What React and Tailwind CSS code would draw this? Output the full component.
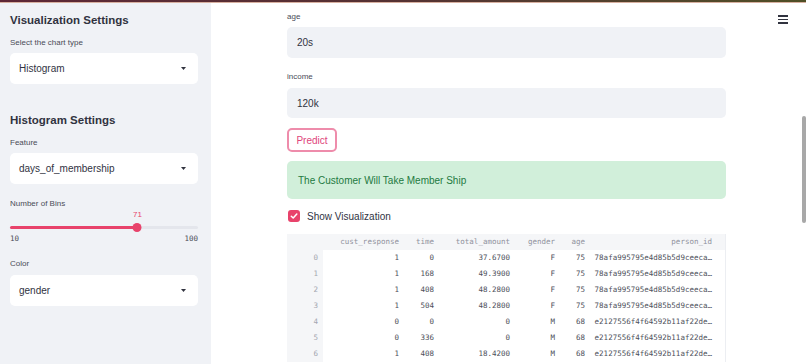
import React from 'react';

const rows = [
  ['0', '1', '0', '37.6700', 'F', '75', '78afa995795e4d85b5d9ceeca…'],
  ['1', '1', '168', '49.3900', 'F', '75', '78afa995795e4d85b5d9ceeca…'],
  ['2', '1', '408', '48.2800', 'F', '75', '78afa995795e4d85b5d9ceeca…'],
  ['3', '1', '504', '48.2800', 'F', '75', '78afa995795e4d85b5d9ceeca…'],
  ['4', '0', '0', '0', 'M', '68', 'e2127556f4f64592b11af22de…'],
  ['5', '0', '336', '0', 'M', '68', 'e2127556f4f64592b11af22de…'],
  ['6', '1', '408', '18.4200', 'M', '68', 'e2127556f4f64592b11af22de…'],
];

const headers = ['', 'cust_response', 'time', 'total_amount', 'gender', 'age', 'person_id'];

const SelectBox = ({ value }) => (
  <div className="h-[31px] bg-white rounded-[5px] flex items-center justify-between pl-[9px] pr-[12px]">
    <span className="text-[10px] text-[#31333f]">{value}</span>
    <svg width="5" height="3" viewBox="0 0 5 3">
      <path d="M0 0 L5 0 L2.5 3 Z" fill="#31333f" />
    </svg>
  </div>
);

const Label = ({ children, className = '' }) => (
  <div className={`text-[8px] leading-[10px] text-[#4a4c57] ${className}`}>{children}</div>
);

const App = () => {
  return (
    <div className="w-[806px] h-[364px] overflow-hidden flex flex-col bg-white" style={{ fontFamily: '"Liberation Sans", Arial, sans-serif' }}>
      <div className="h-[3px] bg-gradient-to-r from-[#5e2736] via-[#553233] to-[#4f4f26] border-b border-b-[#d8b0a0]" />
      <div className="flex flex-1 relative">
        {/* sidebar */}
        <div className="w-[211px] bg-[#f0f2f6] px-[10px] pr-[13px] pt-[10px]">
          <div className="text-[11.5px] leading-[14px] font-bold text-[#31333f]">Visualization Settings</div>
          <Label className="mt-[11px]">Select the chart type</Label>
          <div className="mt-[5px]"><SelectBox value="Histogram" /></div>

          <div className="mt-[29px] text-[11.5px] leading-[14px] font-bold text-[#31333f]">Histogram Settings</div>
          <Label className="mt-[11px]">Feature</Label>
          <div className="mt-[5px]"><SelectBox value="days_of_membership" /></div>

          <Label className="mt-[15px]">Number of Bins</Label>
          <div className="relative mt-[1px] h-[10px]">
            <span className="absolute left-[67.8%] -translate-x-1/2 text-[8px] leading-[10px] text-[#e8436b]">71</span>
          </div>
          <div className="relative h-[14px] flex items-center">
            <div className="w-full h-[3px] rounded-full bg-[#e4e6ec]">
              <div className="h-full w-[67.8%] rounded-full bg-[#e8436b]" />
            </div>
            <div className="absolute left-[67.8%] -translate-x-1/2 w-[9px] h-[9px] rounded-full bg-[#e8436b]" />
          </div>
          <div className="flex justify-between text-[7.5px] leading-[10px] text-[#4a4c57]" style={{ fontFamily: '"DejaVu Sans Mono", monospace' }}>
            <span>10</span>
            <span>100</span>
          </div>

          <Label className="mt-[15px]">Color</Label>
          <div className="mt-[6px]"><SelectBox value="gender" /></div>
        </div>

        {/* main */}
        <div className="flex-1 relative">
          <div className="ml-[76px] w-[439px] pt-[9px]">
            <Label>age</Label>
            <div className="mt-[5px] h-[31px] bg-[#f0f2f6] rounded-[5px] flex items-center pl-[10px] text-[10px] text-[#31333f]">20s</div>
            <Label className="mt-[14px]">income</Label>
            <div className="mt-[6px] h-[30px] bg-[#f0f2f6] rounded-[5px] flex items-center pl-[10px] text-[10px] text-[#31333f]">120k</div>

            <button className="mt-[10px] h-[24px] w-[50px] border-2 border-[#ee8cab] rounded-[5px] text-[10px] text-[#e0457b] bg-white flex items-center justify-center">
              Predict
            </button>

            <div className="mt-[9px] h-[38px] bg-[#d1efda] rounded-[5px] flex items-center pl-[11px] text-[10px] text-[#237a41]">
              The Customer Will Take Member Ship
            </div>

            <div className="mt-[10px] h-[14px] flex items-center gap-[7px] pl-[1px]">
              <div className="w-[12px] h-[12px] rounded-[3px] bg-[#e8436b] flex items-center justify-center">
                <svg width="8" height="8" viewBox="0 0 8 8">
                  <path d="M1.3 4.2 L3.2 6 L6.8 2" stroke="white" strokeWidth="1.5" fill="none" strokeLinecap="round" strokeLinejoin="round" />
                </svg>
              </div>
              <span className="text-[10px] text-[#31333f]">Show Visualization</span>
            </div>

            <div className="mt-[11px] border-r border-[#eceef2]" style={{ fontFamily: '"DejaVu Sans Mono", monospace' }}>
              <div className="grid grid-cols-[36px_81px_35px_76px_45px_30px_127px_1fr] h-[16px] bg-[#f5f6f8] text-[7.5px] text-[#8f919c] items-center">
                {headers.map((h, i) => (
                  <div key={i} className="text-right pr-[5px] whitespace-nowrap">{h}</div>
                ))}
                <div />
              </div>
              {rows.map((r) => (
                <div key={r[0]} className="grid grid-cols-[36px_81px_35px_76px_45px_30px_127px_1fr] h-[16px] text-[7.5px] items-center">
                  {r.map((c, i) => (
                    <div
                      key={i}
                      className={`h-full flex items-center justify-end pr-[5px] whitespace-nowrap ${i === 0 ? 'bg-[#f5f6f8] text-[#a4a6b0]' : 'text-[#4d4f5a]'}`}
                    >
                      {c}
                    </div>
                  ))}
                  <div />
                </div>
              ))}
            </div>
          </div>

          {/* hamburger menu */}
          <div className="absolute top-[12px] right-[18px] flex flex-col gap-[2px]">
            <div className="w-[10px] h-[1.5px] bg-[#31333f]" />
            <div className="w-[10px] h-[1.5px] bg-[#31333f]" />
            <div className="w-[10px] h-[1.5px] bg-[#31333f]" />
          </div>

          {/* scrollbar */}
          <div className="absolute top-[113px] right-0 w-[4px] h-[107px] rounded-full bg-[#a8a8a8]" />
        </div>
      </div>
    </div>
  );
};

export default App;
